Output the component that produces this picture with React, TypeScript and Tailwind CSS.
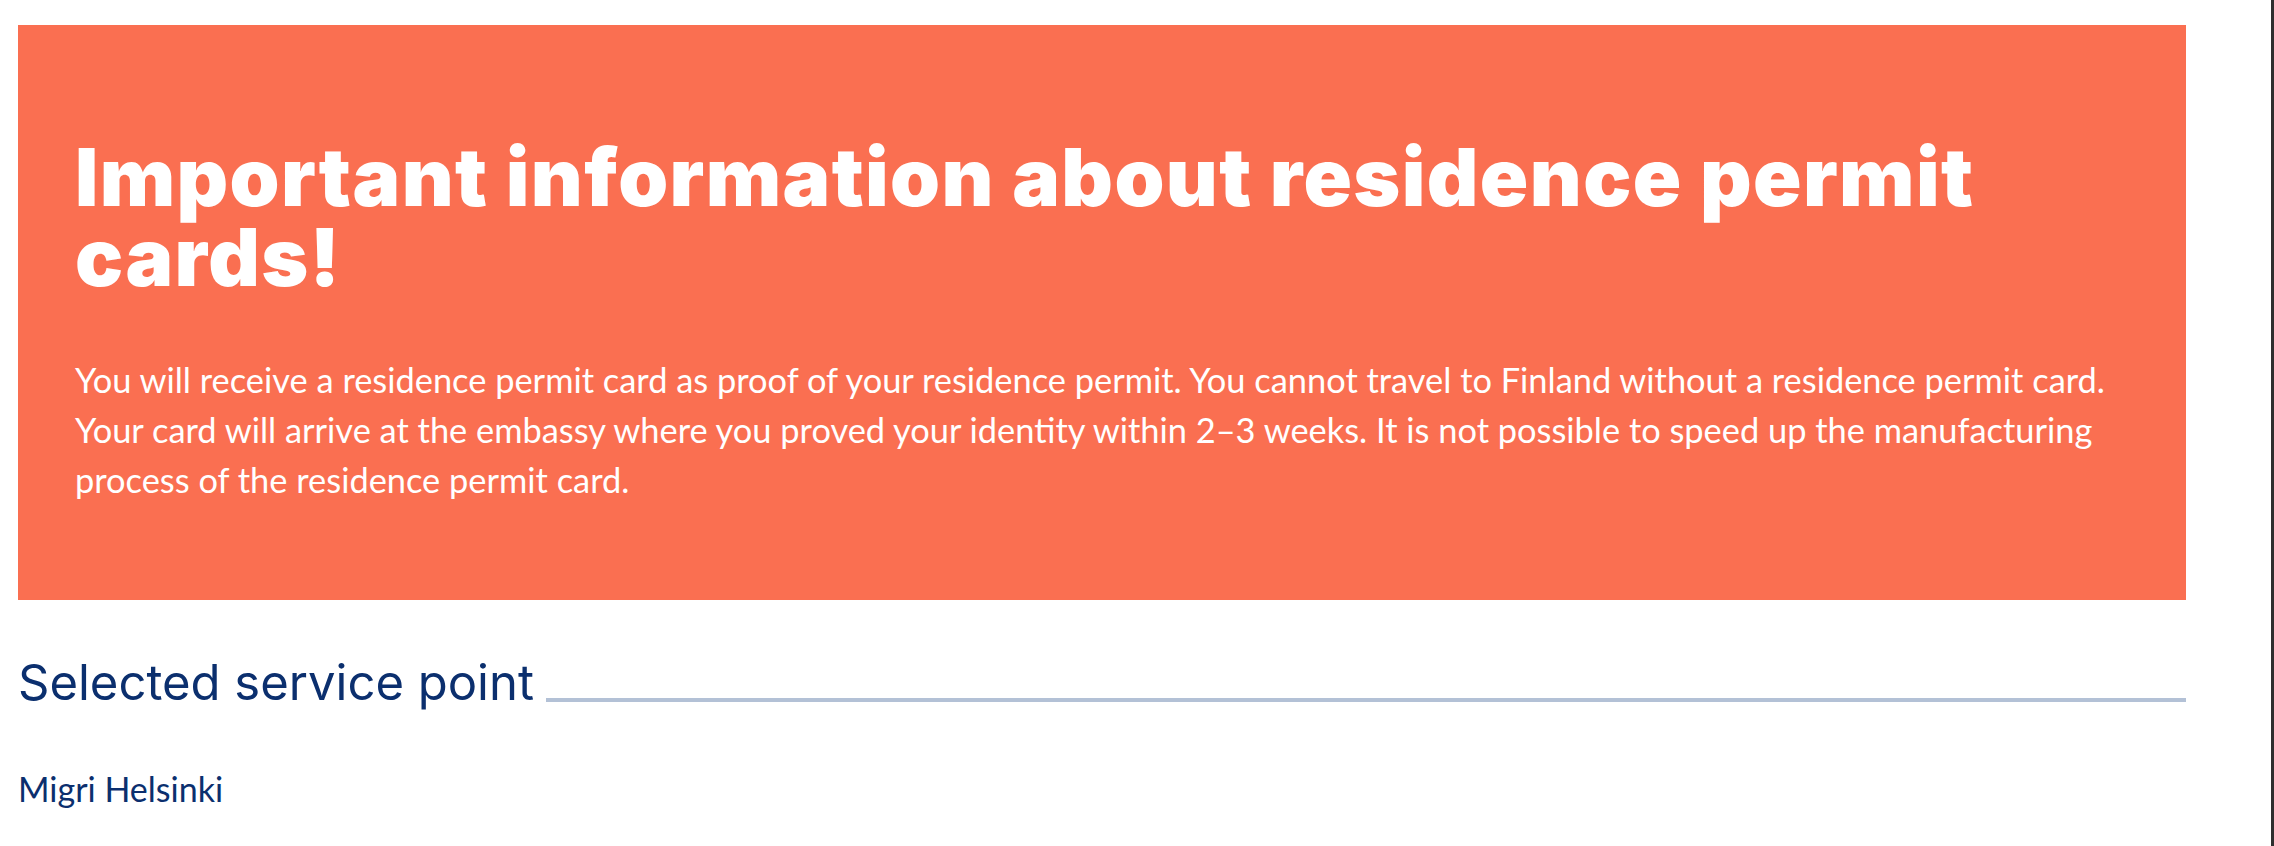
export default function App() {
  return (
    <div className="flex h-[846px] w-full bg-white">
      <div className="flex-1 pt-[25px] pl-[18px] pr-[85px]">
        {/* Notice box */}
        <div className="bg-[#fa6f51] pt-[112px] pb-[95px] pl-[57px] pr-[57px] text-white">
          <h1 className="font-['Inter',sans-serif] text-[80px] leading-[80px] font-black tracking-[1.4px]">
            Important information about residence permit cards!
          </h1>
          <p className="mt-[58px] font-['Lato',sans-serif] text-[34.4px] leading-[50px]">
            You will receive a residence permit card as proof of your residence permit. You cannot travel to Finland
            without a residence permit card. Your card will arrive at the embassy where you proved your identity within
            2–3 weeks. It is not possible to speed up the manufacturing process of the residence permit card.
          </p>
        </div>

        {/* Service point */}
        <div className="mt-[58px] flex items-end">
          <h2 className="font-['Inter',sans-serif] text-[49px] leading-none text-[#0b2f6e]">Selected service point</h2>
          <div className="ml-[12px] mb-[5px] h-[4px] flex-1 bg-[#b3c1d6]" />
        </div>
        <div className="mt-[60px] font-['Lato',sans-serif] text-[34px] leading-[44px] text-[#0b2f6e]">Migri Helsinki</div>
      </div>
      <div className="w-[3px] bg-[#2f2f2f]" />
    </div>
  );
}
